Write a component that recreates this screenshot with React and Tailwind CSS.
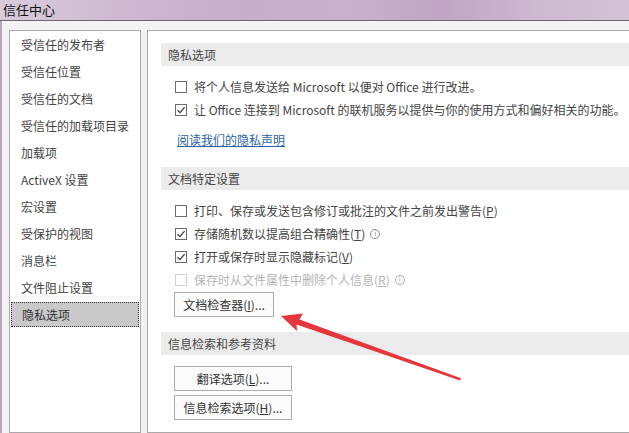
import React from "react";

const font = { fontFamily: '"Noto Sans CJK SC", "Noto Sans", sans-serif' };

const navItems = [
  "受信任的发布者",
  "受信任位置",
  "受信任的文档",
  "受信任的加载项目录",
  "加载项",
  "ActiveX 设置",
  "宏设置",
  "受保护的视图",
  "消息栏",
  "文件阻止设置",
  "隐私选项",
];

function Box({ checked, disabled }) {
  return (
    <div
      className={
        "w-[12px] h-[12px] border flex items-center justify-center shrink-0 bg-white " +
        (disabled ? "border-[#d2d2d2]" : "border-[#6b6b6b]")
      }
    >
      {checked && (
        <svg width="10" height="10" viewBox="0 0 10 10">
          <path d="M1.5 5.2 L4 7.6 L8.6 2.2" fill="none" stroke="#3c3c3c" strokeWidth="1.3" />
        </svg>
      )}
    </div>
  );
}

function Info({ light }) {
  return (
    <span
      className={
        "ml-[5px] inline-flex items-center justify-center w-[10px] h-[10px] rounded-full border text-[7px] leading-none " +
        (light ? "border-[#a8a8a8] text-[#a8a8a8]" : "border-[#8a8a8a] text-[#8a8a8a]")
      }
    >
      i
    </span>
  );
}

function Row({ checked, disabled, children }) {
  return (
    <div className="h-[23px] flex items-center pl-[14px]">
      <Box checked={checked} disabled={disabled} />
      <div className={"ml-[7px] text-[12px] whitespace-nowrap flex items-center " + (disabled ? "text-[#b4b4b4]" : "text-[#444]")}>
        {children}
      </div>
    </div>
  );
}

function Header({ children }) {
  return (
    <div className="h-[23px] bg-[#ebebeb] flex items-center pl-[7px] text-[12px] text-[#444]">{children}</div>
  );
}

function Btn({ w, children, className = "" }) {
  return (
    <div
      className={
        "h-[25px] border border-[#adadad] bg-[#fbfbfb] flex items-center justify-center text-[12px] text-[#333] whitespace-nowrap " + className
      }
      style={{ width: w }}
    >
      {children}
    </div>
  );
}

const U = ({ children }) => <span className="underline">{children}</span>;

export default function App() {
  return (
    <div
      className="relative w-[629px] h-[433px] overflow-hidden bg-[#f3f3f3] flex flex-col"
      style={font}
    >
      <div className="h-[21px] shrink-0 border-b border-[#6e6470] bg-[linear-gradient(90deg,#d9ccdc_0%,#cdb8d0_20%,#c6aec9_40%,#c9b3cc_55%,#bfa5c3_70%,#cdb9d0_85%,#d3c2d6_100%)] flex items-center pl-[3px] text-[13px] text-[#111]">
        信任中心
      </div>
      <div className="flex-1 flex pt-[9px] border-l-2 border-[#b9a5bd]">
        <div className="ml-[7px] w-[132px] shrink-0 border border-[#a9a9a9] bg-white flex flex-col">
          {navItems.map((t, i) =>
            i === navItems.length - 1 ? (
              <div key={t} className="h-[27px] flex items-center px-[1px]">
                <div className="h-[25px] w-full bg-[#c9c9c9] border border-dotted border-[#333] flex items-center pl-[10px] text-[12px] text-[#333] whitespace-nowrap">
                  {t}
                </div>
              </div>
            ) : (
              <div key={t} className="h-[27px] flex items-center pl-[11px] text-[12px] text-[#444] whitespace-nowrap">
                {t}
              </div>
            )
          )}
        </div>
        <div className="ml-[6px] w-[500px] shrink-0 border border-[#a9a9a9] bg-white pt-[12px] pl-[13px] flex flex-col">
          <Header>隐私选项</Header>
          <div className="mt-[9px]">
            <Row>将个人信息发送给 Microsoft 以便对 Office 进行改进。</Row>
            <Row checked>让 Office 连接到 Microsoft 的联机服务以提供与你的使用方式和偏好相关的功能。</Row>
          </div>
          <div className="mt-[8px] h-[22px] flex items-center pl-[16px] text-[12px] text-[#2b62a3] underline whitespace-nowrap">
            阅读我们的隐私声明
          </div>
          <div className="mt-[16px]">
            <Header>文档特定设置</Header>
          </div>
          <div className="mt-[9px]">
            <Row>
              打印、保存或发送包含修订或批注的文件之前发出警告(<U>P</U>)
            </Row>
            <Row checked>
              存储随机数以提高组合精确性(<U>T</U>)
              <Info />
            </Row>
            <Row checked>
              打开或保存时显示隐藏标记(<U>V</U>)
            </Row>
            <Row disabled>
              保存时从文件属性中删除个人信息(<U>R</U>)
              <Info light />
            </Row>
          </div>
          <Btn w={100} className="ml-[13px] mt-[1px]">
            文档检查器(<U>I</U>)...
          </Btn>
          <div className="mt-[15px]">
            <Header>信息检索和参考资料</Header>
          </div>
          <Btn w={118} className="ml-[13px] mt-[11px]">
            翻译选项(<U>L</U>)...
          </Btn>
          <Btn w={118} className="ml-[13px] mt-[4px]">
            信息检索选项(<U>H</U>)...
          </Btn>
        </div>
      </div>
      <svg className="absolute left-0 top-0 pointer-events-none" width="629" height="433" viewBox="0 0 629 433">
        <polygon
          points="281,316 303,313.5 299.5,319.5 461,378.2 460,380.5 296.5,324.5 297,331"
          fill="#e5363b"
        />
      </svg>
    </div>
  );
}
